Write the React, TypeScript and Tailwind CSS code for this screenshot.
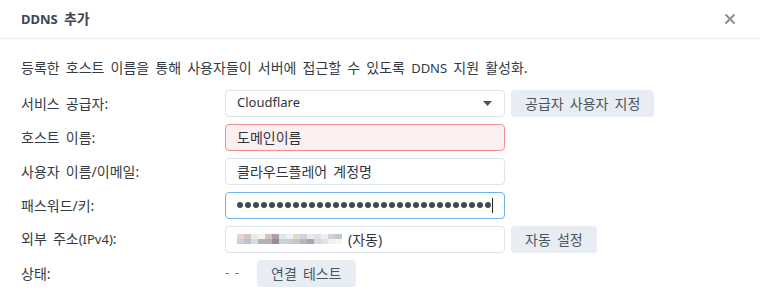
import { X } from 'lucide-react'

// pixelated (blurred-out) IP address, two rows of blocks
const blurTop = [
  'bg-[#e6d6cf]', 'bg-[#d2c6c4]', 'bg-[#e8ebf0]', 'bg-[#f2f4f6]', 'bg-[#cfc3be]', 'bg-[#aca2a5]', 'bg-[#dfe5ec]', 'bg-[#eaf1f6]',
  'bg-[#e6dace]', 'bg-[#d2d4dc]', 'bg-[#e9ecef]', 'bg-[#e4dfdf]', 'bg-[#eeeff2]', 'bg-[#cfd1d8]', 'bg-[#c4c6cd]',
]
const blurBottom = [
  'bg-[#d2cdd0]', 'bg-[#bcc3cf]', 'bg-[#d6dde6]', 'bg-[#adb3bf]', 'bg-[#b9aeab]', 'bg-[#978d94]', 'bg-[#c9d1dd]', 'bg-[#c2cfdb]',
  'bg-[#cdc4bb]', 'bg-[#b2b6c1]', 'bg-[#a4a8b4]', 'bg-[#d8d8dd]', 'bg-[#e2e3e7]', 'bg-[#eff0f2]', 'bg-[#f6f6f7]',
]

function Label({ children }: { children: React.ReactNode }) {
  return <div className="w-[204px] shrink-0 text-[#333b44]">{children}</div>
}

function Field({ children, className = '' }: { children: React.ReactNode; className?: string }) {
  return (
    <div className={`flex h-[27px] w-[280px] items-center rounded-[4px] border px-[11px] text-[#2f363e] ${className}`}>
      {children}
    </div>
  )
}

function Btn({ children }: { children: React.ReactNode }) {
  return (
    <button type="button" className="h-[27px] rounded-[4px] bg-[#e8edf3] px-[14px] text-[#4b5562] [word-spacing:2.5px]">
      {children}
    </button>
  )
}

const latin = 'text-[13px]'

export default function App() {
  return (
    <div className="h-[303px] w-[760px] bg-white font-['Noto_Sans','Noto_Sans_CJK_KR',sans-serif] text-[14px] [word-spacing:2.5px]">
      <div className="flex h-[39px] items-center justify-between border-b border-[#e8edf3] pl-[21px] pr-[22px]">
        <span className="font-bold text-[#3f4650]">
          <span className={latin}>DDNS</span> 추가
        </span>
        <X size={16} strokeWidth={3} className="text-[#8a9098]" />
      </div>
      <div className="px-[21px] pt-[18px]">
        <p className="text-[#333b44]">
          등록한 호스트 이름을 통해 사용자들이 서버에 접근할 수 있도록 <span className={latin}>DDNS</span> 지원 활성화.
        </p>
        <div className="mt-[11px] flex flex-col gap-[7px]">
          <div className="flex items-center">
            <Label>서비스 공급자:</Label>
            <Field className="justify-between border-[#dde4ec]">
              <span className={latin}>Cloudflare</span>
              <svg width="9" height="5" viewBox="0 0 9 5" className="mr-[1px]">
                <path d="M0 0h9L4.5 5z" fill="#4b5562" />
              </svg>
            </Field>
            <div className="ml-[6px]">
              <Btn>공급자 사용자 지정</Btn>
            </div>
          </div>
          <div className="flex items-center">
            <Label>호스트 이름:</Label>
            <Field className="border-[#ef8f8f] bg-[#fcefef]">도메인이름</Field>
          </div>
          <div className="flex items-center">
            <Label>사용자 이름/이메일:</Label>
            <Field className="border-[#dde4ec]">클라우드플레어 계정명</Field>
          </div>
          <div className="flex items-center">
            <Label>패스워드/키:</Label>
            <Field className="border-[#6fb2ef]">
              <div className="flex gap-[2px]">
                {Array.from({ length: 32 }).map((_, i) => (
                  <span key={i} className="h-[6px] w-[6px] rounded-full bg-[#434a54]" />
                ))}
              </div>
              <span className="ml-px h-[15px] w-px bg-[#222]" />
            </Field>
          </div>
          <div className="flex items-center">
            <Label>
              외부 주소<span className={latin}>(IPv4)</span>:
            </Label>
            <Field className="border-[#dde4ec]">
              <div className="flex flex-col">
                <div className="flex">
                  {blurTop.map((c, i) => (
                    <span key={i} className={`h-[5px] w-[7px] ${c}`} />
                  ))}
                </div>
                <div className="flex">
                  {blurBottom.map((c, i) => (
                    <span key={i} className={`h-[5px] w-[7px] ${c}`} />
                  ))}
                </div>
              </div>
              <span className="ml-[6px]">(자동)</span>
            </Field>
            <div className="ml-[6px]">
              <Btn>자동 설정</Btn>
            </div>
          </div>
          <div className="flex items-center">
            <Label>상태:</Label>
            <span className="w-[32px] text-[13px] text-[#6b727b]">- -</span>
            <Btn>연결 테스트</Btn>
          </div>
        </div>
      </div>
    </div>
  )
}
